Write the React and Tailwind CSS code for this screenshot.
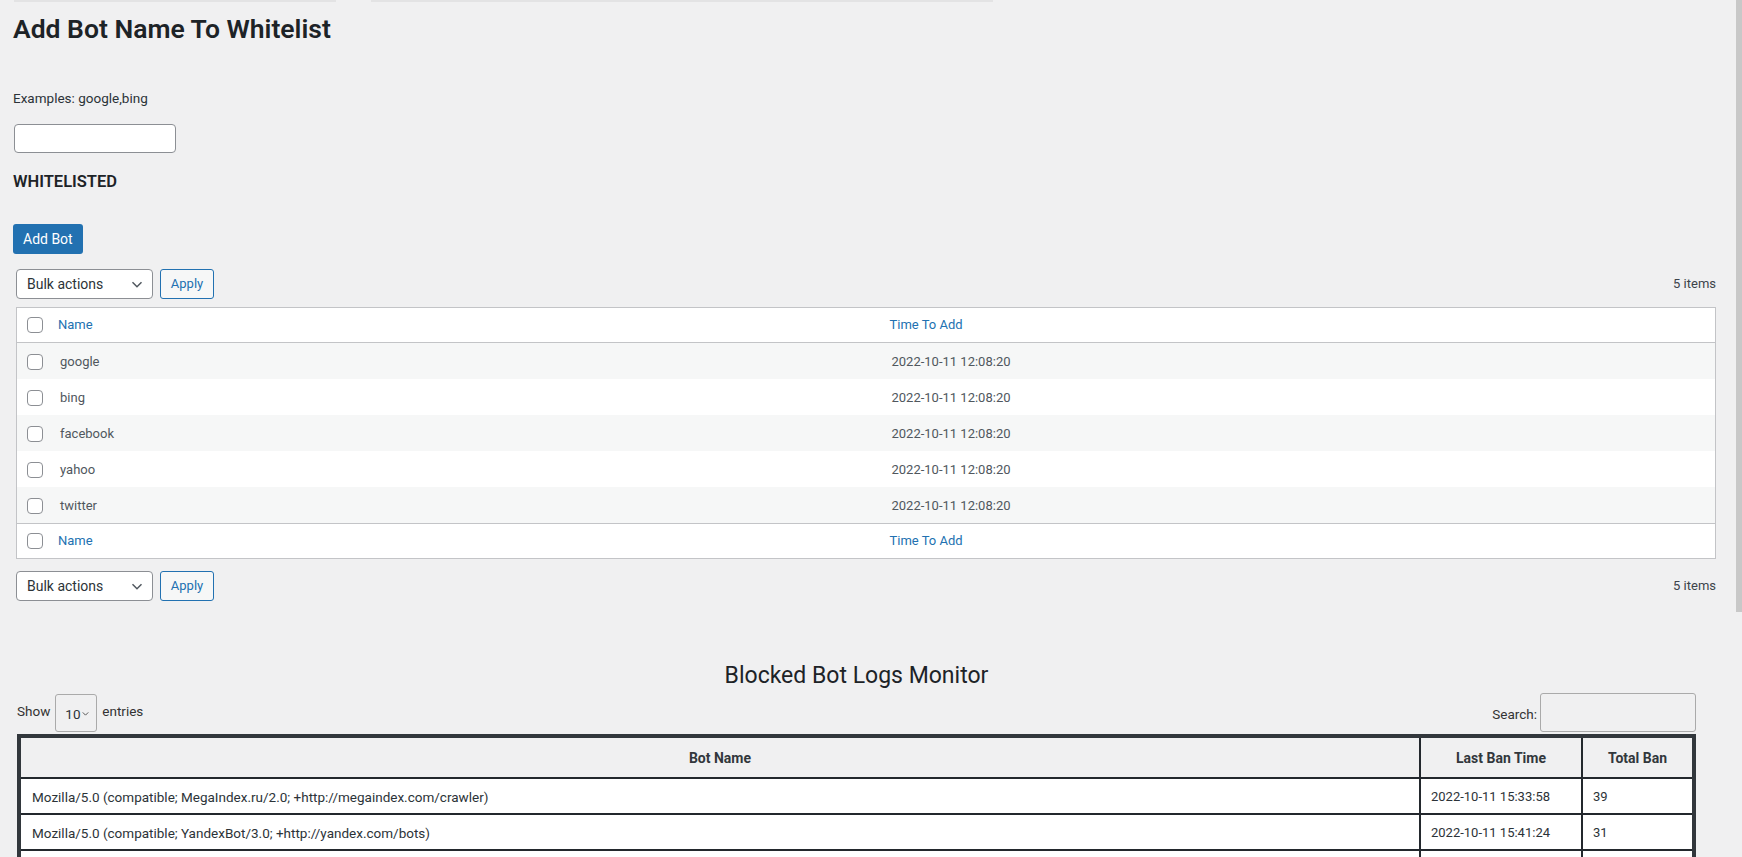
import { useState } from "react";

const whitelist = [
    { name: "google", time: "2022-10-11 12:08:20" },
    { name: "bing", time: "2022-10-11 12:08:20" },
    { name: "facebook", time: "2022-10-11 12:08:20" },
    { name: "yahoo", time: "2022-10-11 12:08:20" },
    { name: "twitter", time: "2022-10-11 12:08:20" },
];

const banLogs = [
    { bot: "Mozilla/5.0 (compatible; MegaIndex.ru/2.0; +http://megaindex.com/crawler)", last: "2022-10-11 15:33:58", total: 39 },
    { bot: "Mozilla/5.0 (compatible; YandexBot/3.0; +http://yandex.com/bots)", last: "2022-10-11 15:41:24", total: 31 },
];

const Chevron = ({ className }) => (
    <svg viewBox="0 0 20 20" className={className} fill="none" stroke="currentColor" strokeWidth="1.6">
        <polyline points="5,8 10,13 15,8" />
    </svg>
);

const CheckBox = () => (
    <span className="block w-[16px] h-[16px] rounded-[4px] border border-[#8c8f94] bg-white" />
);

const TableNav = () => (
    <div className="flex items-center justify-between h-[30px]">
        <div className="flex items-center ml-[3px]">
            <div className="flex items-center justify-between w-[137px] h-[30px] pl-[10px] pr-[6px] border border-[#8c8f94] rounded-[4px] bg-white text-[#2c3338] text-[14px]">
                <span>Bulk actions</span>
                <Chevron className="w-[18px] h-[18px] text-[#50575e]" />
            </div>
            <button className="ml-[7px] h-[30px] w-[54px] border border-[#2271b1] rounded-[3px] bg-[#f6f7f7] text-[#2271b1] text-[13px]">
                Apply
            </button>
        </div>
        <span className="text-[13px] text-[#3c434a]">5 items</span>
    </div>
);

const HeadRow = ({ border }) => (
    <div className={`grid grid-cols-[31px_1fr_1fr] items-center h-[35px] bg-white ${border}`}>
        <div className="pl-[10px]"><CheckBox /></div>
        <a className="pl-[10px] text-[#2271b1] text-[13px]">Name</a>
        <a className="pl-[8px] text-[#2271b1] text-[13px]">Time To Add</a>
    </div>
);

const LogRow = ({ children }) => (
    <div className="grid grid-cols-[1fr_162px_111px] h-[36px] bg-white border-b-2 border-[#23282d] text-[#2c3338]">
        {children}
    </div>
);

export default function App() {
    const [botName, setBotName] = useState("");

    return (
        <div className="h-[857px] overflow-hidden flex bg-[#f0f0f1] font-['Roboto','Liberation_Sans',sans-serif] text-[13px] text-[#3c434a]">
            <div className="flex-1 min-w-0 pl-[13px] pr-[18px]">
                {/* edges of the admin notices above */}
                <div className="flex h-[2px]">
                    <div className="ml-[1px] w-[322px] bg-[#e3e3e4]" />
                    <div className="ml-[35px] w-[622px] bg-[#e3e3e4]" />
                </div>

                <h1 className="mt-[11px] text-[26.5px] leading-[32px] font-semibold text-[#1d2327]">Add Bot Name To Whitelist</h1>

                <p className="mt-[43px] text-[13.5px] leading-[20px] text-[#2c3338]">Examples: google,bing</p>

                <input
                    value={botName}
                    onChange={(e) => setBotName(e.target.value)}
                    className="block mt-[16px] ml-[1px] w-[162px] h-[29px] px-2 border border-[#8c8f94] rounded-[4px] bg-white outline-none"
                />

                <h3 className="mt-[18px] text-[16.5px] leading-[22px] font-semibold text-[#1d2327]">WHITELISTED</h3>

                <button className="block mt-[31px] h-[30px] px-[10px] rounded-[3px] bg-[#2271b1] text-white text-[14px]">
                    Add Bot
                </button>

                <div className="mt-[15px]"><TableNav /></div>

                <div className="mt-[8px] ml-[3px] border border-[#c3c4c7] bg-white">
                    <HeadRow border="border-b border-[#c3c4c7]" />
                    {whitelist.map((row, i) => (
                        <div key={row.name} className={`grid grid-cols-[31px_1fr_1fr] items-center h-[36px] pt-[2px] ${i % 2 === 0 ? "bg-[#f6f7f7]" : "bg-white"}`}>
                            <div className="pl-[10px]"><CheckBox /></div>
                            <span className="pl-[12px] text-[#50575e]">{row.name}</span>
                            <span className="pl-[10px] text-[#50575e]">{row.time}</span>
                        </div>
                    ))}
                    <HeadRow border="border-t border-[#c3c4c7]" />
                </div>

                <div className="mt-[12px]"><TableNav /></div>

                <div className="ml-[4px] mr-[20px]">
                    <h2 className="mt-[59px] text-center text-[23px] leading-[32px] text-[#1d2327]">Blocked Bot Logs Monitor</h2>

                    <div className="flex items-center justify-between mt-[1px] h-[39px] text-[13.5px] text-[#333]">
                        <div className="flex items-center">
                            <span className="-mt-[3px]">Show</span>
                            <div className="flex items-center ml-[5px] w-[42px] h-[38px] pl-[9px] border border-[#aaa] rounded-[3px]">
                                <span className="mt-[3px] text-[#2c3338]">10</span>
                                <Chevron className="w-[11px] h-[11px] mt-[2px] text-[#444]" />
                            </div>
                            <span className="ml-[5px] -mt-[3px]">entries</span>
                        </div>
                        <label className="flex items-center">
                            <span className="mt-[4px]">Search:</span>
                            <input className="ml-[3px] w-[156px] h-[39px] px-2 border border-[#aaa] rounded-[3px] bg-transparent outline-none" />
                        </label>
                    </div>

                    <div className="mt-[2px] border-4 border-[#32373c] text-[13px]">
                        <div className="grid grid-cols-[1fr_162px_111px] h-[41px] bg-[#f0f0f1] border-b-2 border-[#23282d] font-bold text-[14px] text-[#32373c]">
                            <div className="flex items-center justify-center pt-[2px]">Bot Name</div>
                            <div className="flex items-center justify-center pt-[2px] border-l-2 border-[#23282d]">Last Ban Time</div>
                            <div className="flex items-center justify-center pt-[2px] border-l-2 border-[#23282d]">Total Ban</div>
                        </div>
                        {banLogs.map((log) => (
                            <LogRow key={log.bot}>
                                <div className="flex items-center pl-[11px] pt-[2px] text-[13.5px]">{log.bot}</div>
                                <div className="flex items-center pl-[10px] pt-[2px] border-l-2 border-[#23282d]">{log.last}</div>
                                <div className="flex items-center pl-[10px] pt-[2px] border-l-2 border-[#23282d]">{log.total}</div>
                            </LogRow>
                        ))}
                        {/* next log row, scrolled below the fold */}
                        <LogRow>
                            <div />
                            <div className="border-l-2 border-[#23282d]" />
                            <div className="border-l-2 border-[#23282d]" />
                        </LogRow>
                    </div>
                </div>
            </div>

            {/* page scrollbar */}
            <div className="w-[8px] flex justify-end">
                <div className="w-[6px] h-[612px] bg-[#c8c8c8]" />
            </div>
        </div>
    );
}
